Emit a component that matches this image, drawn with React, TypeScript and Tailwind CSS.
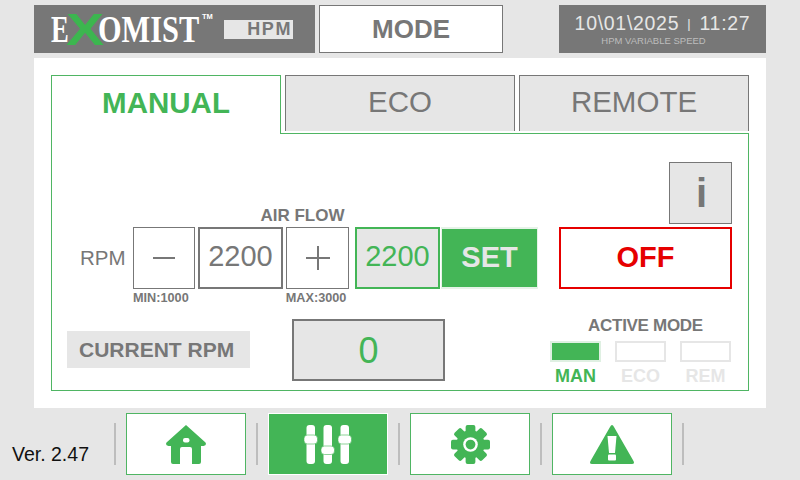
const GREEN = "#43b556";

function Home() {
  return (
    <svg width="40" height="39" viewBox="0 0 40 39">
      <path d="M20 0 L39.5 17.5 Q41 20.5 37.5 21 L35 21 L35 37 Q35 39 33 39 L7 39 Q5 39 5 37 L5 21 L2.5 21 Q-1 20.5 0.5 17.5 Z" fill={GREEN} />
      <rect x="17" y="13" width="6.5" height="4.5" rx="2" fill="#fff" />
      <path d="M14 39 V24 Q14 22 16 22 H24 Q26 22 26 24 V39 Z" fill="#fff" />
    </svg>
  );
}

function Sliders() {
  return (
    <svg width="48" height="39" viewBox="0 0 48 39" fill="#fff">
      <rect x="2.5" y="0" width="8.5" height="39" rx="3" />
      <rect x="19.5" y="0" width="8.5" height="39" rx="3" />
      <rect x="36.5" y="0" width="8.5" height="39" rx="3" />
      <rect x="0" y="10" width="13.5" height="9" rx="3.5" stroke={GREEN} strokeWidth="0.6" />
      <rect x="17" y="21" width="13.5" height="8.5" rx="3.5" stroke={GREEN} strokeWidth="0.6" />
      <rect x="34" y="10" width="13.5" height="9" rx="3.5" stroke={GREEN} strokeWidth="0.6" />
    </svg>
  );
}

function Gear() {
  const teeth = [0, 45, 90, 135, 180, 225, 270, 315];
  return (
    <svg width="39" height="39" viewBox="0 0 40 40">
      {teeth.map((a) => (
        <rect key={a} x="15" y="0" width="10" height="11" rx="2" fill={GREEN} transform={`rotate(${a} 20 20)`} />
      ))}
      <circle cx="20" cy="20" r="14.5" fill={GREEN} />
      <circle cx="20" cy="20" r="7.5" fill="#fff" />
      <circle cx="20" cy="20" r="5" fill={GREEN} />
    </svg>
  );
}

function Warning() {
  return (
    <svg width="46" height="39" viewBox="0 0 46 39">
      <path d="M23 0 Q24 0 25 2 L44.5 36 Q46 39 43 39 L3 39 Q0 39 1.5 36 L21 2 Q22 0 23 0 Z" fill={GREEN} />
      <path d="M18.5 11 h9 l-1.5 17 h-6 z" fill="#fff" />
      <rect x="19" y="29.5" width="8" height="6" rx="1" fill="#fff" />
    </svg>
  );
}

function NavSep() {
  return <div className="w-[2px] h-[42px] bg-[#bdbdbd] shrink-0 mx-[10px]" />;
}

function NavButton({ active, children }: { active?: boolean; children: React.ReactNode }) {
  return (
    <div
      className={
        active
          ? "w-[120px] h-[62px] bg-[#43b556] border border-white flex items-center justify-center shrink-0"
          : "w-[120px] h-[62px] bg-white border border-[#4fb563] flex items-center justify-center shrink-0"
      }
    >
      {children}
    </div>
  );
}

function Tab({ label }: { label: string }) {
  return (
    <div className="w-[230px] h-[56px] bg-[#e6e6e6] border border-b-0 border-[#777] flex items-center justify-center text-[29.5px] text-[#777] pb-[2px]">
      {label}
    </div>
  );
}

function Mode({ label, on }: { label: string; on?: boolean }) {
  return (
    <div className="flex flex-col items-center w-[51px]">
      <div
        className={
          on
            ? "w-[51px] h-[21px] bg-[#43b556] border-2 border-[#dff0e2]"
            : "w-[51px] h-[21px] bg-white border-2 border-[#e6e6e6]"
        }
      />
      <span className={on ? "text-[18px] font-bold text-[#43b556] mt-[4px] leading-[20px]" : "text-[18px] font-bold text-[#e6e6e6] mt-[4px] leading-[20px]"}>
        {label}
      </span>
    </div>
  );
}

export default function App() {
  return (
    <div className="w-[800px] h-[480px] bg-[#e6e6e6] overflow-hidden flex flex-col font-['Liberation_Sans',Arial,sans-serif]">
      {/* header */}
      <div className="flex ml-[34px] mt-[5px] h-[48px] w-[732px] shrink-0">
        <div className="w-[281px] h-full bg-[#777] flex items-center pl-[17px]">
          <div className="flex items-center font-['Liberation_Serif',serif] font-bold text-white text-[37px] leading-none w-[173px] h-full">
            <span className="inline-block w-[15px] origin-left scale-x-[0.72]">E</span>
            <span className="inline-block w-[32px] origin-left scale-x-[1.27] font-['Liberation_Sans',sans-serif] text-[#3cb64f] text-[45px]">X</span>
            <span className="inline-block w-[101px] origin-left scale-x-[0.82]">OMIST</span>
            <span className="font-['Liberation_Sans',sans-serif] text-[7.5px] self-start mt-[8px] ml-[3px]">TM</span>
          </div>
          <div className="w-[69px] h-[19px] bg-[#e6e6e6] flex items-center justify-end pr-[1px] text-[18px] font-bold text-[#777] tracking-[1.6px] leading-none">
            HPM
          </div>
        </div>
        <div className="w-[184px] h-full ml-[4px] bg-white border border-[#777] flex items-center justify-center text-[26px] font-bold text-[#777]">
          MODE
        </div>
        <div className="w-[207px] h-full ml-auto bg-[#777] flex flex-col items-center text-[#e6e6e6]">
          <div className="text-[19.5px] tracking-[0.7px] leading-[22px] mt-[7px] whitespace-nowrap">
            10\01\2025 <span className="text-[13px] align-[2px] mx-[2px]">|</span> 11:27
          </div>
          <div className="text-[9.5px] text-[#bdbdbd] leading-[10px] mt-[1px] -ml-[18px]">HPM VARIABLE SPEED</div>
        </div>
      </div>

      {/* main panel */}
      <div className="ml-[34px] mt-[5px] w-[732px] h-[350px] bg-white shrink-0 pt-[17px] px-[17px]">
        <div className="flex gap-[4px] w-[698px] items-start">
          <div className="relative z-10 w-[230px] h-[59px] bg-white border border-b-0 border-[#4fb563] flex items-center justify-center text-[29.5px] font-bold text-[#43b556] pb-[4px]">
            MANUAL
          </div>
          <Tab label="ECO" />
          <Tab label="REMOTE" />
        </div>
        <div className="-mt-px w-[698px] h-[258px] border border-[#4fb563] flex flex-col">
          {/* i row */}
          <div className="flex items-end h-[93px] shrink-0 pb-[3px]">
            <div className="ml-[208px] w-[85px] text-center text-[17px] font-bold text-[#777] leading-[18px] -mb-[1px] whitespace-nowrap">AIR FLOW</div>
            <div className="ml-auto mr-[16px] w-[63px] h-[62px] bg-[#e6e6e6] border border-[#777] flex items-center justify-center text-[40px] font-bold text-[#777] leading-none pl-[2px]">
              i
            </div>
          </div>
          {/* control row */}
          <div className="flex h-[62px] shrink-0 items-center">
            <div className="w-[81px] pl-[28px] text-[20.5px] text-[#777] whitespace-nowrap">RPM</div>
            <div className="w-[62px] h-[62px] border border-[#777] flex items-center justify-center">
              <div className="w-[22px] h-[2px] bg-[#777]" />
            </div>
            <div className="w-[85px] h-[62px] ml-[3px] border-2 border-[#777] flex items-center justify-center text-[29px] text-[#777] pb-[2px]">2200</div>
            <div className="w-[63px] h-[62px] ml-[3px] border border-[#777] flex items-center justify-center">
              <svg width="24" height="24" viewBox="0 0 24 24"><path d="M0 12H24M12 0V24" stroke="#777" strokeWidth="2" /></svg>
            </div>
            <div className="w-[85px] h-[62px] ml-[6px] bg-[#e6e6e6] border-2 border-[#43b556] flex items-center justify-center text-[29px] text-[#43b556] pb-[2px]">2200</div>
            <div className="w-[97px] h-[62px] ml-px bg-[#43b556] border border-y-2 border-[#e6f3e8] flex items-center justify-center text-[29px] font-bold text-[#e6e6e6]">SET</div>
            <div className="w-[173px] h-[62px] ml-[21px] bg-white border-2 border-[#e60000] flex items-center justify-center text-[29px] font-bold text-[#e60000]">OFF</div>
          </div>
          {/* min / max */}
          <div className="flex h-[20px] shrink-0 text-[12.7px] font-bold text-[#777] items-center">
            <span className="ml-[81px]">MIN:1000</span>
            <span className="ml-[97px]">MAX:3000</span>
          </div>
          {/* bottom row */}
          <div className="flex mt-[10px]">
            <div className="w-[183px] h-[37px] mt-[12px] ml-[15px] bg-[#e6e6e6] flex items-center pl-[12px] text-[21px] font-bold text-[#777] whitespace-nowrap">CURRENT RPM</div>
            <div className="w-[153px] h-[62px] ml-[42px] bg-[#e6e6e6] border-2 border-[#777] flex items-center justify-center text-[36px] text-[#43b556] pt-[2px]">0</div>
            <div className="flex flex-col ml-[105px] w-[182px]">
              <div className="text-[17px] font-bold text-[#777] text-center leading-[20px] -mt-[3px] pl-[9px] whitespace-nowrap tracking-[-0.3px]">ACTIVE MODE</div>
              <div className="flex gap-[14px] mt-[5px]">
                <Mode label="MAN" on />
                <Mode label="ECO" />
                <Mode label="REM" />
              </div>
            </div>
          </div>
        </div>
      </div>

      {/* footer */}
      <div className="flex items-center mt-[5px] h-[62px] shrink-0">
        <div className="w-[114px] pl-[12px] pt-[21px] text-[19.5px] text-[#111] whitespace-nowrap">Ver. 2.47</div>
        <div className="w-[2px] h-[42px] bg-[#bdbdbd] shrink-0 mr-[10px]" />
        <NavButton><Home /></NavButton>
        <NavSep />
        <NavButton active><Sliders /></NavButton>
        <NavSep />
        <NavButton><Gear /></NavButton>
        <NavSep />
        <NavButton><Warning /></NavButton>
        <div className="w-[2px] h-[42px] bg-[#bdbdbd] shrink-0 ml-[10px]" />
      </div>
    </div>
  );
}
